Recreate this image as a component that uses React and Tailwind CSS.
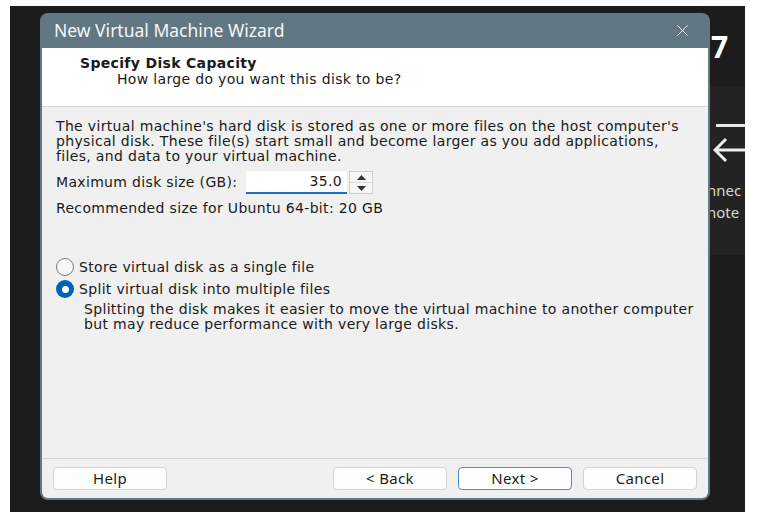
import React from 'react';
import { X } from 'lucide-react';

const body = { fontFamily: '"DejaVu Sans", Verdana, sans-serif' };
const ui = { fontFamily: '"Noto Sans", "Open Sans", sans-serif' };

const Radio = ({ checked, label }) => (
  <label className="flex items-center gap-[5px] h-[20px]">
    {checked ? (
      <span className="w-[18px] h-[18px] rounded-full bg-[#0063b8] flex items-center justify-center">
        <span className="w-[7px] h-[7px] rounded-full bg-white" />
      </span>
    ) : (
      <span className="w-[18px] h-[18px] rounded-full border border-[#7a7a7a] bg-[#f7f7f7]" />
    )}
    <span>{label}</span>
  </label>
);

const Btn = ({ children, primary }) => (
  <button
    style={ui}
    className={`w-[114px] h-[23px] rounded-[4px] bg-[#fdfdfd] text-[15px] text-[#1b1b1b] leading-none border ${primary ? 'border-[#4b8fd1]' : 'border-[#d4d4d4]'}`}
  >
    {children}
  </button>
);

export default function App() {
  return (
    <div className="w-[759px] h-[522px] bg-white pt-[6px] pl-[10px]">
      <div className="w-[735px] h-[506px] bg-[#1c1c1c] flex">
        <div className="w-[30px]" />
        <div className="w-[670px] h-[487px] mt-[7px] rounded-[8px] bg-[#617783] p-[2px] pt-0 flex flex-col overflow-hidden">
          <div className="h-[35px] flex items-center justify-between pl-[12px] pr-[16px] text-[#f4f6f7]" style={ui}>
            <span className="text-[17.5px]">New Virtual Machine Wizard</span>
            <X size={19} strokeWidth={1.2} />
          </div>
          <div className="flex-1 flex flex-col bg-[#f0f0f0] rounded-b-[6px] overflow-hidden text-[14px] tracking-[0.33px] text-[#1a1a1a] whitespace-nowrap" style={body}>
            <div className="h-[59px] bg-white border-b border-[#d9d9d9] pt-[7px] pl-[38px] leading-[16px]">
              <div className="font-bold">Specify Disk Capacity</div>
              <div className="pl-[37px]">How large do you want this disk to be?</div>
            </div>
            <div className="flex-1 pl-[14px] pr-[10px] pt-[12px]">
              <p className="leading-[15px]">
                The virtual machine's hard disk is stored as one or more files on the host computer's
                <br />
                physical disk. These file(s) start small and become larger as you add applications,
                <br />
                files, and data to your virtual machine.
              </p>
              <div className="flex items-center mt-[7px] h-[23px]">
                <span className="w-[190px]">Maximum disk size (GB):</span>
                <div className="w-[101px] h-[23px] bg-white border-b-2 border-[#1f6fc0] flex items-center justify-end pr-[5px]">35.0</div>
                <div className="ml-[2px] w-[24px] h-[23px] flex flex-col border border-[#cfcfcf] bg-[#f7f7f7]">
                  <div className="flex-1 flex items-center justify-center border-b border-[#d8d8d8]">
                    <svg width="9" height="5" viewBox="0 0 9 5"><path d="M0 5 L4.5 0 L9 5 Z" fill="#333" /></svg>
                  </div>
                  <div className="flex-1 flex items-center justify-center">
                    <svg width="9" height="5" viewBox="0 0 9 5"><path d="M0 0 L4.5 5 L9 0 Z" fill="#333" /></svg>
                  </div>
                </div>
              </div>
              <div className="mt-[6px] leading-[16px]">Recommended size for Ubuntu 64-bit: 20 GB</div>
              <div className="mt-[41px] flex flex-col gap-[2px]">
                <Radio label="Store virtual disk as a single file" />
                <Radio checked label="Split virtual disk into multiple files" />
              </div>
              <p className="pl-[28px] mt-[3px] leading-[15px]">
                Splitting the disk makes it easier to move the virtual machine to another computer
                <br />
                but may reduce performance with very large disks.
              </p>
            </div>
            <div className="h-[40px] border-t border-[#d6d6d6] flex items-center px-[11px]">
              <Btn>Help</Btn>
              <div className="flex-1" />
              <div className="flex gap-[11px]">
                <Btn>&lt; Back</Btn>
                <Btn primary>Next &gt;</Btn>
                <Btn>Cancel</Btn>
              </div>
            </div>
          </div>
        </div>
        <div className="w-[35px] flex flex-col text-white overflow-hidden" style={ui}>
          <div className="h-[80px] pt-[26px] pl-[1px] text-[30px] font-bold leading-none">7</div>
          <div className="h-[169px] bg-[#232323] flex flex-col">
            <div className="mt-[38px] ml-[6px] h-[3px] bg-[#e8e8e8]" />
            <svg className="mt-[10px] ml-[3px]" width="40" height="26" viewBox="0 0 40 26">
              <path d="M2 13 H40 M13 2 L2 13 L13 24" stroke="#eee" strokeWidth="3" fill="none" />
            </svg>
            <div className="mt-[16px] text-[15px] leading-[22px] text-[#d8d8d8] whitespace-nowrap -ml-[3px]">nnec</div>
            <div className="text-[15px] leading-[22px] text-[#d8d8d8] whitespace-nowrap -ml-[3px]">note</div>
          </div>
        </div>
      </div>
    </div>
  );
}
